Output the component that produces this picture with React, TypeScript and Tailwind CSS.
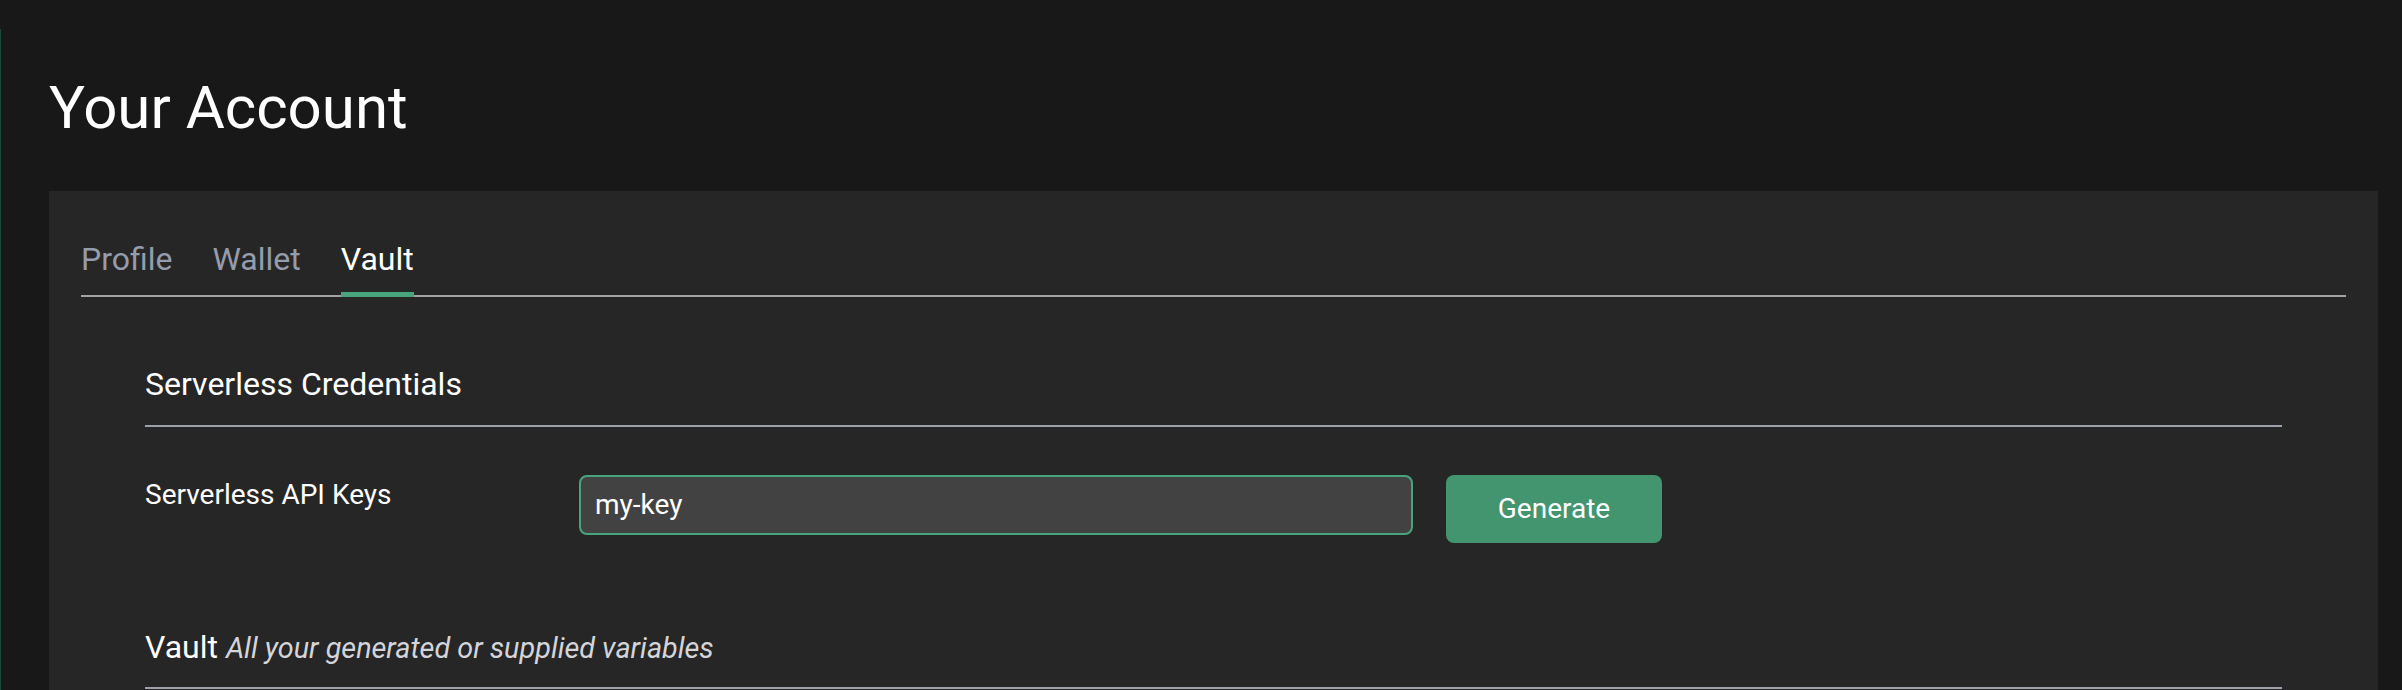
import React from "react";

export default function App() {
  const tabs = ["Profile", "Wallet", "Vault"];
  const active = "Vault";
  return (
    <div
      className="h-[690px] overflow-hidden bg-[#181818] text-white"
      style={{ fontFamily: "Roboto, 'Noto Sans', sans-serif" }}
    >
      <div className="mt-[29px] min-h-[661px] border-l border-[#1c4a36] pl-[48px] pr-[24px] pt-[43px]">
        <h1 className="text-[60px] leading-[72px] font-normal text-white">Your Account</h1>
        <div className="mt-[47px] bg-[#262626] px-[32px] pt-[48px] pb-[60px]">
          <div className="flex gap-[40px] border-b-2 border-[#a3a3a3]">
            {tabs.map((t) => (
              <div
                key={t}
                className={
                  t === active
                    ? "-mb-[2px] border-b-[5px] border-[#48a47c] pb-[13px] text-[32px] leading-[40px] text-white"
                    : "-mb-[2px] border-b-[5px] border-transparent pb-[13px] text-[32px] leading-[40px] text-[#959cab]"
                }
              >
                {t}
              </div>
            ))}
          </div>

          <div className="px-[64px] pt-[67px]">
            <div className="border-b-2 border-[#9ca0aa] pb-[21px] text-[32px] leading-[40px] text-white">
              Serverless Credentials
            </div>

            <div className="mt-[48px] flex items-start">
              <div className="w-[434px] text-[28px] leading-[40px] text-white">Serverless API Keys</div>
              <div className="flex h-[60px] w-[834px] items-center rounded-lg border-2 border-[#48a47c] bg-[#424242] pl-[14px] text-[28px] leading-[40px] text-white">
                my-key
              </div>
              <button className="ml-[33px] flex h-[68px] w-[216px] items-center justify-center rounded-lg bg-[#42956f] text-[28px] leading-[40px] text-white">
                Generate
              </button>
            </div>

            <div className="mt-[84px] border-b-2 border-[#9ca0aa] pb-[19px] text-[32px] leading-[40px] text-white">
              Vault{" "}
              <span className="text-[28.8px] italic text-[#d4d5da]">All your generated or supplied variables</span>
            </div>
          </div>
        </div>
      </div>
    </div>
  );
}
